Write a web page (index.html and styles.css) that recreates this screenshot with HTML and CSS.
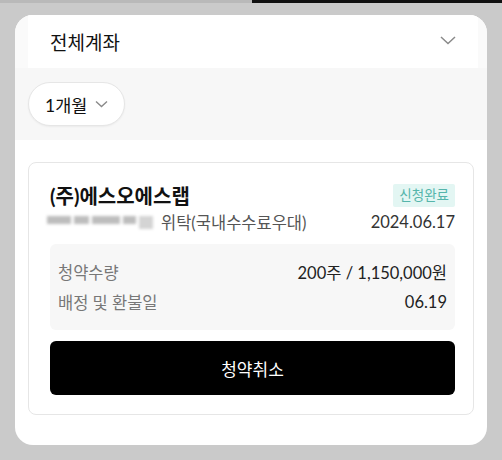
FILE: index.html
```html
<!DOCTYPE html>
<html>
<head>
    <link rel="stylesheet" href="styles.css">
</head>
<body>
    <div class="topbar">
        <div class="topbar-left"></div>
        <div class="topbar-right"></div>
    </div>

    <div class="sheet">
        <!-- 계좌 선택 -->
        <div class="sheet-head">
            <div class="account-select">
                <span>전체계좌</span>
                <svg width="16" height="9" viewBox="0 0 16 9"><path d="M1 1 L8 7.5 L15 1" fill="none" stroke="#8a8a8a" stroke-width="1.5"/></svg>
            </div>
        </div>

        <!-- 기간 필터 -->
        <div class="filter">
            <button class="period-pill">
                1개월
                <svg width="13" height="8" viewBox="0 0 13 8"><path d="M1 1.5 L6.5 6.5 L12 1.5" fill="none" stroke="#8a8a8a" stroke-width="1.4"/></svg>
            </button>
        </div>

        <!-- 청약 내역 -->
        <div class="list">
            <div class="card">
                <div class="card-title-row">
                    <span class="card-title">(주)에스오에스랩</span>
                    <span class="badge">신청완료</span>
                </div>
                <div class="card-sub-row">
                    <span class="account">
                        <span class="masked"><i></i><i></i><i></i><i></i><i></i></span>
                        위탁(국내수수료우대)
                    </span>
                    <span class="date">2024.06.17</span>
                </div>
                <div class="detail">
                    <div class="detail-row">
                        <span class="label">청약수량</span>
                        <span class="value">200주 / 1,150,000원</span>
                    </div>
                    <div class="detail-row">
                        <span class="label">배정 및 환불일</span>
                        <span class="value">06.19</span>
                    </div>
                </div>
                <button class="cancel-button">청약취소</button>
            </div>
        </div>
    </div>
</body>
</html>
```

FILE: styles.css
```css
body {
    margin: 0;
    background-color: #cacaca;
    font-family: Lato, "Noto Sans CJK KR", sans-serif;
    color: #111;
    width: 502px;
    height: 460px;
    overflow: hidden;
}
.topbar {
    display: flex;
    height: 3px;
}
.topbar-left {
    width: 252px;
    background-color: #b9b9b9;
}
.topbar-right {
    flex: 1;
    background-color: #111;
}
.sheet {
    margin: 12px 15px 0 15px;
    width: 472px;
    height: 430px;
    background-color: #fff;
    border-radius: 18px;
    overflow: hidden;
    display: flex;
    flex-direction: column;
}
.sheet-head {
    background-color: #fafafa;
    padding: 0 9px 0 13px;
}
.account-select {
    height: 53px;
    background-color: #fff;
    display: flex;
    align-items: center;
    justify-content: space-between;
    padding: 0 22px 0 22px;
    font-size: 19px;
}
.account-select svg {
    margin-top: -2px;
}
.filter {
    background-color: #f7f7f7;
    height: 72px;
    padding: 14px 13px;
    box-sizing: border-box;
}
.period-pill {
    height: 44px;
    padding: 0 16px 0 16px;
    border: 1px solid #e6e6e6;
    border-radius: 22px;
    background-color: #fff;
    box-shadow: 0 1px 2px rgba(0, 0, 0, 0.05);
    font-family: Lato, "Noto Sans CJK KR", sans-serif;
    font-size: 17.5px;
    color: #111;
    display: flex;
    align-items: center;
    gap: 8px;
}
.list {
    flex: 1;
    padding: 22px 13px 0 13px;
}
.card {
    border: 1px solid #e6e6e6;
    border-radius: 8px;
    padding: 18px 18px 19px 21px;
}
.card-title-row {
    display: flex;
    justify-content: space-between;
    align-items: center;
    height: 28px;
}
.card-title {
    font-size: 20px;
    font-weight: bold;
}
.badge {
    background-color: #e3f6f3;
    color: #55b5ab;
    font-size: 13.5px;
    padding: 2px 6px;
    border-radius: 2px;
    line-height: 19px;
}
.card-sub-row {
    display: flex;
    justify-content: space-between;
    align-items: center;
    height: 26px;
    font-size: 16.5px;
    color: #555;
}
.account {
    display: flex;
    align-items: center;
    gap: 8px;
    margin-left: -3px;
}
.masked {
    display: flex;
    gap: 3px;
    filter: blur(1.8px);
}
.masked i {
    display: block;
    height: 8px;
    background-color: #bdbdbd;
}
.masked i:nth-child(1) { width: 24px; }
.masked i:nth-child(2) { width: 15px; }
.masked i:nth-child(3) { width: 28px; }
.masked i:nth-child(4) { width: 13px; }
.masked i:nth-child(5) { width: 14px; background-color: #d4d4d4; height: 13px; }
.date {
    color: #333;
}
.detail {
    margin-top: 9px;
    background-color: #f7f7f7;
    border-radius: 6px;
    padding: 13px 8px 13px 8px;
}
.detail-row {
    display: flex;
    justify-content: space-between;
    align-items: center;
    height: 30px;
    font-size: 16.5px;
}
.label {
    color: #777;
}
.value {
    color: #222;
}
.cancel-button {
    margin-top: 11px;
    width: 100%;
    height: 54px;
    background-color: #000;
    color: #fff;
    border: none;
    border-radius: 6px;
    font-family: Lato, "Noto Sans CJK KR", sans-serif;
    font-size: 17px;
}
```
